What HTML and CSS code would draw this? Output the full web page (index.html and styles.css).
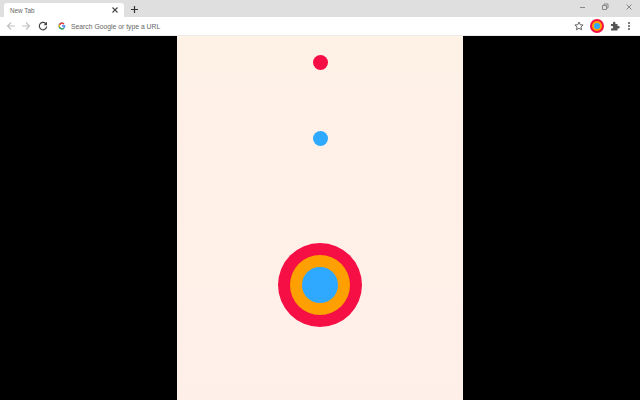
FILE: index.html
```html
<!DOCTYPE html>
<html lang="en">
<head>
<meta charset="UTF-8">
<meta name="viewport" content="width=device-width, initial-scale=1.0">
<title>New Tab</title>
<link rel="stylesheet" href="styles.css">
</head>
<body>
<div class="tabstrip">
    <div class="tab">
        <span class="tab-title">New Tab</span>
        <svg class="tab-close" width="8" height="8" viewBox="0 0 8 8"><path d="M1.500 1.500l5 5M6.500 1.500l-5 5" stroke="#444" stroke-width="1.100"/></svg>
    </div>
    <svg class="new-tab" width="9" height="9" viewBox="0 0 9 9"><path d="M4.500 1v7M1 4.500h7" stroke="#333" stroke-width="1.200"/></svg>
    <div class="window-buttons">
        <svg width="8" height="8" viewBox="0 0 8 8"><path d="M3 4.500h5" stroke="#888"/></svg>
        <svg width="8" height="8" viewBox="0 0 8 8"><path d="M1.500 2.500h4v4h-4zM3 2.500V1h4v4H5.500" fill="none" stroke="#888"/></svg>
        <svg width="8" height="8" viewBox="0 0 8 8"><path d="M1.500 1.500l5 5M6.500 1.500l-5 5" stroke="#888"/></svg>
    </div>
</div>
<div class="toolbar">
    <svg class="nav" width="10" height="10" viewBox="0 0 10 10"><path d="M9 5H1.500M5 1.500L1.500 5 5 8.500" fill="none" stroke="#c0c0c0" stroke-width="1.100"/></svg>
    <svg class="nav" width="10" height="10" viewBox="0 0 10 10"><path d="M1 5h7.500M5 1.500L8.500 5 5 8.500" fill="none" stroke="#c0c0c0" stroke-width="1.100"/></svg>
    <svg class="nav reload" width="10" height="10" viewBox="0 0 10 10"><path d="M8.200 3.200A3.700 3.700 0 1 0 8.700 5.500" fill="none" stroke="#444" stroke-width="1.200"/><path d="M9 .8v3.400H5.600z" fill="#444"/></svg>
    <div class="omnibox">
        <svg class="g-logo" width="8" height="8" viewBox="0 0 8 8">
            <path d="M7.300 3.300H4v1.400h1.900A2.100 2.100 0 1 1 5.400 2.500l1-1A3.500 3.500 0 1 0 7.300 3.300z" fill="#4285f4"/>
            <path d="M1 2.200A3.500 3.500 0 0 1 6.400 1.500l-1 1A2.100 2.100 0 0 0 2.100 3.200z" fill="#ea4335"/>
            <path d="M1 5.800a3.500 3.500 0 0 1 0-3.600l1.100 1a2.100 2.100 0 0 0 0 1.600z" fill="#fbbc05"/>
            <path d="M1 5.800l1.100-1a2.100 2.100 0 0 0 3.100 1l1.100.900A3.500 3.500 0 0 1 1 5.800z" fill="#34a853"/>
        </svg>
        <span class="omnibox-text">Search Google or type a URL</span>
        <svg class="star" width="10" height="10" viewBox="0 0 10 10"><path d="M5 1l1.200 2.700 2.900.3-2.200 1.900.7 2.900L5 7.300 2.400 8.800l.7-2.900L.9 4l2.900-.3z" fill="none" stroke="#666" stroke-width="1"/></svg>
    </div>
    <div class="ext-icon"><div class="ext-icon-inner"></div></div>
    <svg class="puzzle" width="10" height="10" viewBox="0 0 10 10"><path d="M1 3h2V2a1.200 1.200 0 0 1 2.400 0v1h2.100v2h1a1.200 1.200 0 0 1 0 2.400h-1V9.500H1V7.500h1a1.200 1.200 0 0 0 0-2.400H1z" fill="#555"/></svg>
    <div class="menu-dots"><i></i><i></i><i></i></div>
</div>
<div class="page">
    <div class="game">
        <div class="dot dot-red"></div>
        <div class="dot dot-blue"></div>
        <div class="target">
            <div class="target-mid">
                <div class="target-core"></div>
            </div>
        </div>
    </div>
</div>
</body>
</html>
```

FILE: styles.css
```css
* {
    box-sizing: border-box;
}

html, body {
    margin: 0;
    height: 100%;
    overflow: hidden;
}

body {
    width: 640px;
    height: 400px;
    background: #000;
    font-family: "Liberation Sans", Arial, sans-serif;
    display: flex;
    flex-direction: column;
}

.tabstrip {
    height: 17px;
    background: #dfdfe0;
    display: flex;
    align-items: flex-end;
    padding-left: 4px;
}

.tab {
    width: 120px;
    height: 14px;
    background: #fff;
    border-radius: 3px 3px 0 0;
    display: flex;
    align-items: center;
    padding: 0 5px 0 6px;
}

.tab-title {
    flex: 1;
    font-size: 6.300px;
    color: #666;
}

.new-tab {
    margin: 0 0 3px 6px;
}

.window-buttons {
    margin-left: auto;
    align-self: flex-start;
    display: flex;
    gap: 16px;
    padding: 3px 7px 0 0;
}

.toolbar {
    height: 19px;
    background: #fff;
    border-bottom: 1px solid #ececec;
    display: flex;
    align-items: center;
    padding: 0 10px 0 6px;
}

.nav {
    margin-right: 5px;
}

.reload {
    margin: 0 4px 0 2px;
}

.omnibox {
    flex: 1;
    height: 17px;
    display: flex;
    align-items: center;
    padding: 0 6px;
}

.g-logo {
    margin-right: 5px;
}

.omnibox-text {
    flex: 1;
    font-size: 6.800px;
    color: #666;
}

.ext-icon {
    width: 14px;
    height: 14px;
    border-radius: 50%;
    background: #f50f45;
    display: flex;
    align-items: center;
    justify-content: center;
}

.ext-icon-inner {
    width: 6px;
    height: 6px;
    border-radius: 50%;
    background: #2fa9ff;
    box-shadow: 0 0 0 2px #ff9f00;
}

.puzzle {
    margin-left: 6px;
}

.menu-dots {
    display: flex;
    flex-direction: column;
    gap: 1px;
    margin-left: 8px;
}

.menu-dots i {
    width: 2px;
    height: 2px;
    border-radius: 50%;
    background: #555;
}

.page {
    flex: 1;
    display: flex;
    justify-content: center;
}

.game {
    width: 286px;
    background: linear-gradient(#fef1e6, #ffefe9);
    display: flex;
    flex-direction: column;
    align-items: center;
    padding-top: 18.500px;
}

.dot {
    width: 15px;
    height: 15px;
    margin-left: 1px;
    border-radius: 50%;
}

.dot-red {
    background: #f50f45;
}

.dot-blue {
    background: #2fa9ff;
    margin-top: 61px;
}

.target {
    width: 84px;
    height: 84px;
    margin-top: 97.500px;
    border-radius: 50%;
    background: #f50f45;
    display: flex;
    align-items: center;
    justify-content: center;
}

.target-mid {
    width: 60px;
    height: 60px;
    border-radius: 50%;
    background: #ff9f00;
    display: flex;
    align-items: center;
    justify-content: center;
}

.target-core {
    width: 36px;
    height: 36px;
    border-radius: 50%;
    background: #2fa9ff;
}
```
